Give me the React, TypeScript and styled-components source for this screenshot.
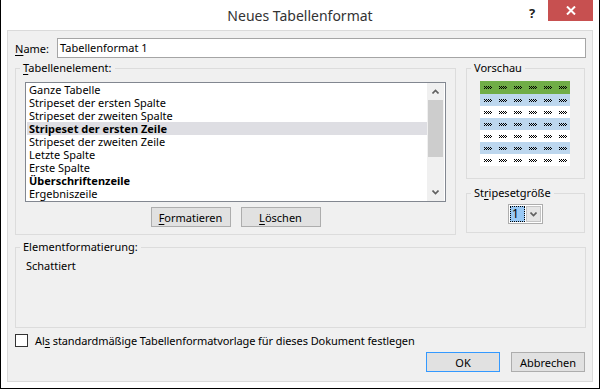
import React from "react";
import styled, { createGlobalStyle } from "styled-components";

const GlobalStyle = createGlobalStyle`
  html, body {
    margin: 0;
    padding: 0;
    background: #ffffff;
  }
  body {
    font-family: "Noto Sans", "Open Sans", sans-serif;
    font-size: 11px;
    color: #000;
  }
  * {
    box-sizing: border-box;
  }
`;

const Window = styled.div`
  width: 600px;
  height: 389px;
  background: #ffffff;
  border: 1px solid #000;
  border-top: none;
  padding: 0 6px 6px 6px;
  display: flex;
  flex-direction: column;
`;

const TitleBar = styled.div`
  height: 30px;
  flex-shrink: 0;
  position: relative;
  display: flex;
  justify-content: center;
  align-items: center;
`;

const Title = styled.div`
  font-size: 14px;
  color: #333333;
`;

const Controls = styled.div`
  position: absolute;
  right: 0;
  top: 0;
  display: flex;
  gap: 2px;
`;

const HelpButton = styled.div`
  width: 28px;
  height: 21px;
  display: flex;
  align-items: center;
  justify-content: center;
  font-weight: 700;
  font-size: 13px;
  color: #222;
  padding-top: 5px;
`;

const CloseButton = styled.div`
  width: 45px;
  height: 21px;
  background: #c75050;
  display: flex;
  align-items: center;
  justify-content: center;
`;

const Content = styled.div`
  flex: 1;
  min-height: 0;
  background: #f0f0f0;
  border: 1px solid #dadada;
  padding: 7px 7px 9px 7px;
  display: flex;
  flex-direction: column;
`;

const NameRow = styled.div`
  display: flex;
  align-items: center;
  height: 20px;
`;

const Label = styled.label`
  width: 42px;
`;

const TextInput = styled.div`
  flex: 1;
  height: 20px;
  margin-right: -1px;
  background: #fff;
  border: 1px solid #a5a5a5;
  padding: 0 2px;
  line-height: 18px;
`;

const MainRow = styled.div`
  display: flex;
  gap: 10px;
  margin-top: 2px;
  align-items: flex-start;
`;

const Group = styled.fieldset<{ $w?: string; $pb?: number }>`
  margin: 0;
  border: 1px solid #dcdcdc;
  padding: 0 9px ${(p) => (p.$pb ?? 8)}px 9px;
  width: ${(p) => p.$w || "auto"};
  min-width: 0;
  display: flex;
  flex-direction: column;
`;

const Legend = styled.legend`
  padding: 0 3px;
  margin-left: -5px;
  line-height: 16px;
  color: #000;
`;

const RightColumn = styled.div`
  display: flex;
  flex-direction: column;
  gap: 6px;
  width: 119px;
`;

const ListBox = styled.div`
  margin-top: 6px;
  height: 120px;
  background: #fff;
  border: 1px solid #828790;
  display: flex;
`;

const Items = styled.div`
  flex: 1;
  padding-left: 1px;
  display: flex;
  flex-direction: column;
`;

const Item = styled.div<{ $bold?: boolean; $selected?: boolean }>`
  height: 13px;
  line-height: 13px;
  padding-left: 2px;
  white-space: nowrap;
  font-weight: ${(p) => (p.$bold ? 700 : 400)};
  background: ${(p) => (p.$selected ? "#dedee3" : "transparent")};
`;

const ScrollBar = styled.div`
  width: 17px;
  margin-right: 1px;
  background: #f0f0f0;
  display: flex;
  flex-direction: column;
`;

const ScrollArrow = styled.div`
  height: 17px;
  display: flex;
  align-items: center;
  justify-content: center;
`;

const Thumb = styled.div`
  height: 57px;
  margin: 0 1px;
  background: #cdcdcd;
`;

const Track = styled.div`
  flex: 1;
`;

const ButtonRow = styled.div<{ $justify?: string; $gap?: number; $mt?: number }>`
  display: flex;
  gap: ${(p) => p.$gap ?? 10}px;
  margin-top: ${(p) => p.$mt ?? 0}px;
  justify-content: ${(p) => p.$justify || "center"};
`;

const Button = styled.div<{ $w?: number; $default?: boolean }>`
  width: ${(p) => p.$w || 80}px;
  height: 20px;
  background: #e1e1e1;
  border: 1px solid ${(p) => (p.$default ? "#3399ff" : "#adadad")};
  display: flex;
  align-items: center;
  justify-content: center;
`;

const Preview = styled.div`
  margin: 5px auto 0 auto;
  width: 91px;
  display: grid;
  grid-template-columns: repeat(6, 15px);
  grid-template-rows: 13px repeat(6, 12px);
  padding-right: 1px;
`;

const PreviewCell = styled.div<{ $bg: string }>`
  background: ${(p) => p.$bg};
  display: flex;
  align-items: center;
  justify-content: center;
`;

const Combo = styled.div`
  margin: 3px auto 0 auto;
  width: 35px;
  height: 20px;
  border: 1px solid #adadad;
  background: #fff;
  display: flex;
  padding: 1px;
`;

const ComboValue = styled.div`
  width: 15px;
  background: #99c9f5;
  border: 1px dotted #000;
  display: flex;
  align-items: center;
  padding-left: 1px;
  line-height: 14px;
  font-size: 12px;
`;

const ComboButton = styled.div`
  flex: 1;
  margin-left: 1px;
  background: #e5e5e5;
  border: 1px solid #c4c4c4;
  display: flex;
  align-items: center;
  justify-content: center;
`;

const FormatText = styled.div`
  margin-top: 3px;
  padding-left: 1px;
  line-height: 16px;
  height: 61px;
`;

const CheckRow = styled.div`
  display: flex;
  align-items: center;
  gap: 7px;
  margin-top: 5px;
  height: 14px;
  letter-spacing: -0.08px;
`;

const CheckBox = styled.div`
  width: 13px;
  height: 13px;
  background: #fff;
  border: 1px solid #333;
`;

const Acc = styled.span`
  text-decoration: underline;
  text-underline-offset: 2px;
`;

function Chevron({ up }: { up?: boolean }) {
  return (
    <svg width="7" height="5" viewBox="0 0 7 5">
      <path
        d={up ? "M0.5 4.5 L3.5 1.5 L6.5 4.5" : "M0.5 0.5 L3.5 3.5 L6.5 0.5"}
        fill="none"
        stroke="#606060"
        strokeWidth="1.6"
      />
    </svg>
  );
}

function Dots() {
  const rects = [];
  for (let y = 0; y < 3; y++) {
    for (let x = 0; x < 8; x++) {
      if ((x + y) % 2 === 0) rects.push(<rect key={`${x}-${y}`} x={x} y={y} width="1" height="1" />);
    }
  }
  return (
    <svg width="8" height="3" viewBox="0 0 8 3" fill="#000" shapeRendering="crispEdges">
      {rects}
    </svg>
  );
}

const items = [
  { text: "Ganze Tabelle" },
  { text: "Stripeset der ersten Spalte" },
  { text: "Stripeset der zweiten Spalte" },
  { text: "Stripeset der ersten Zeile", bold: true, selected: true },
  { text: "Stripeset der zweiten Zeile" },
  { text: "Letzte Spalte" },
  { text: "Erste Spalte" },
  { text: "Überschriftenzeile", bold: true },
  { text: "Ergebniszeile" },
];

const rowColors = ["#70ad47", "#bdd7ee", "#ffffff", "#bdd7ee", "#ffffff", "#bdd7ee", "#ffffff"];

export default function App() {
  return (
    <>
      <GlobalStyle />
      <Window>
        <TitleBar>
          <Title>Neues Tabellenformat</Title>
          <Controls>
            <HelpButton>?</HelpButton>
            <CloseButton>
              <svg width="10" height="9" viewBox="0 0 10 9">
                <path d="M1 0.5 L9 8.5 M9 0.5 L1 8.5" stroke="#fff" strokeWidth="2" />
              </svg>
            </CloseButton>
          </Controls>
        </TitleBar>
        <Content>
          <NameRow>
            <Label>
              <Acc>N</Acc>ame:
            </Label>
            <TextInput>Tabellenformat 1</TextInput>
          </NameRow>
          <MainRow>
            <Group $w="442px" $pb={7}>
              <Legend>
                <Acc>T</Acc>abellenelement:
              </Legend>
              <ListBox>
                <Items>
                  {items.map((it) => (
                    <Item key={it.text} $bold={it.bold} $selected={it.selected}>
                      {it.text}
                    </Item>
                  ))}
                </Items>
                <ScrollBar>
                  <ScrollArrow>
                    <Chevron up />
                  </ScrollArrow>
                  <Thumb />
                  <Track />
                  <ScrollArrow>
                    <Chevron />
                  </ScrollArrow>
                </ScrollBar>
              </ListBox>
              <ButtonRow $mt={5}>
                <Button>
                  <Acc>F</Acc>ormatieren
                </Button>
                <Button>
                  <Acc>L</Acc>öschen
                </Button>
              </ButtonRow>
            </Group>
            <RightColumn>
              <Group $w="119px" $pb={12}>
                <Legend>Vorschau</Legend>
                <Preview>
                  {rowColors.map((c, r) =>
                    Array.from({ length: 6 }).map((_, i) => (
                      <PreviewCell key={`${r}-${i}`} $bg={c}>
                        <Dots />
                      </PreviewCell>
                    ))
                  )}
                </Preview>
              </Group>
              <Group $w="119px">
                <Legend>
                  St<Acc>r</Acc>ipesetgröße
                </Legend>
                <Combo>
                  <ComboValue>1</ComboValue>
                  <ComboButton>
                    <Chevron />
                  </ComboButton>
                </Combo>
              </Group>
            </RightColumn>
          </MainRow>
          <Group $w="571px" style={{ marginTop: 4 }}>
            <Legend>Elementformatierung:</Legend>
            <FormatText>Schattiert</FormatText>
          </Group>
          <CheckRow>
            <CheckBox />
            <span>
              Al<Acc>s</Acc> standardmäßige Tabellenformatvorlage für dieses Dokument festlegen
            </span>
          </CheckRow>
          <ButtonRow $justify="flex-end" $gap={11} $mt={5}>
            <Button $w={74} $default>
              OK
            </Button>
            <Button $w={74}>Abbrechen</Button>
          </ButtonRow>
        </Content>
      </Window>
    </>
  );
}
